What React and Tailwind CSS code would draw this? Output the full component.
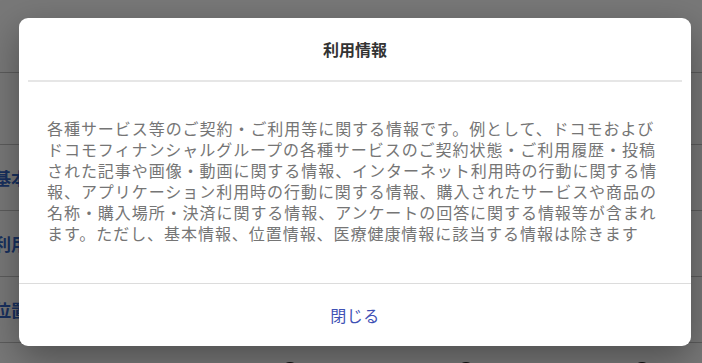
import React from 'react'

const rows = ['', '基本情報', '利用情報', '位置情報']

const lines = [
  '各種サービス等のご契約・ご利用等に関する情報です。例として、ドコモおよび',
  'ドコモフィナンシャルグループの各種サービスのご契約状態・ご利用履歴・投稿',
  'された記事や画像・動画に関する情報、インターネット利用時の行動に関する情',
  '報、アプリケーション利用時の行動に関する情報、購入されたサービスや商品の',
  '名称・購入場所・決済に関する情報、アンケートの回答に関する情報等が含まれ',
  'ます。ただし、基本情報、位置情報、医療健康情報に該当する情報は除きます',
]

export default function App() {
  return (
    <div
      className="relative w-[702px] h-[363px] overflow-hidden bg-white"
      style={{ fontFamily: '"Noto Sans CJK JP", "Noto Sans", sans-serif' }}
    >
      {/* 背景ページ */}
      <div className="flex flex-col">
        <div className="h-[73px] border-b border-[#c4c4c4]" />
        {rows.map((label, i) => (
          <div
            key={i}
            className={`${i === 0 ? 'h-[72px]' : 'h-[66px]'} flex items-center border-b border-[#c4c4c4] -ml-[6px]`}
          >
            <span className="text-[17px] font-bold text-[#3466c8]">{label}</span>
          </div>
        ))}
        <div className="flex pt-[19px]">
          <div className="ml-[281px] w-[18px] h-[18px] rounded-full bg-[#222]" />
          <div className="ml-[158px] w-[18px] h-[18px] rounded-full bg-[#222]" />
          <div className="ml-[158px] w-[18px] h-[18px] rounded-full bg-[#222]" />
        </div>
      </div>

      {/* オーバーレイ */}
      <div className="absolute inset-0 bg-black/[0.53]" />

      {/* モーダル */}
      <div className="absolute left-[19px] top-[18px] w-[672px] bg-white rounded-[9px] shadow-[0_12px_36px_rgba(0,0,0,0.35)]">
        <div className="py-[19px] text-center text-[16px] leading-[24px] font-bold text-[#333]">
          利用情報
        </div>
        <div className="mx-[9px] h-[2px] bg-[#e6e6e6]" />
        <div className="px-[28px] pt-[36px] pb-[39px]">
          <p className="text-[16px] leading-[21px] tracking-[0.95px] text-[#757575] whitespace-nowrap">
            {lines.map((l, i) => (
              <React.Fragment key={i}>
                {l}
                {i < lines.length - 1 && <br />}
              </React.Fragment>
            ))}
          </p>
        </div>
        <div className="h-px bg-[#dcdcdc]" />
        <button className="w-full h-[62px] flex items-center justify-center text-[16px] tracking-[0.5px] text-[#3f51b5]">
          閉じる
        </button>
      </div>
    </div>
  )
}
